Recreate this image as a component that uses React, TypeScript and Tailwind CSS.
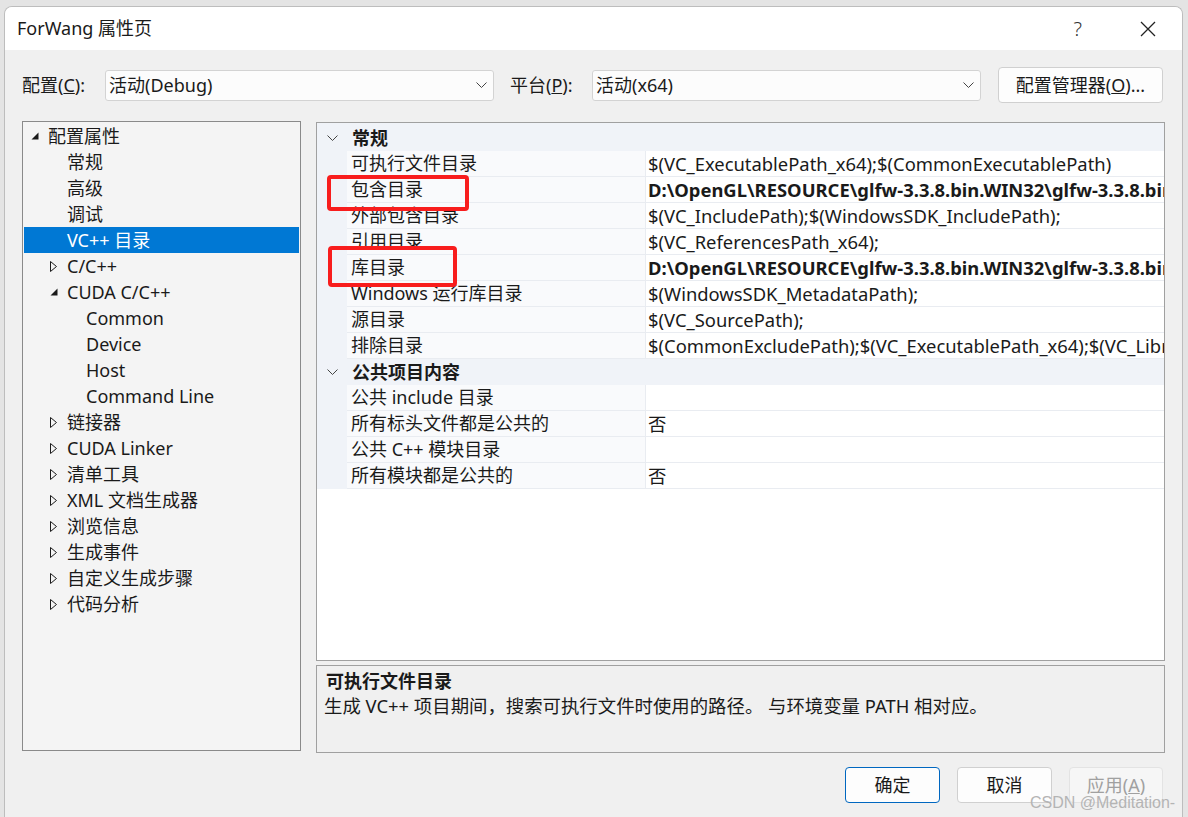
import React from "react";

const FONT = "font-['Noto_Sans','Noto_Sans_CJK_SC',sans-serif]";

function Chevron(props: { className?: string }) {
  return (
    <svg width="11" height="6" viewBox="0 0 11 6" className={props.className}>
      <path d="M0.5 0.5 L5.5 5.5 L10.5 0.5" fill="none" stroke="#444" strokeWidth="1" />
    </svg>
  );
}

function Expanded() {
  return (
    <svg width="8" height="8" viewBox="0 0 8 8">
      <polygon points="7.5,0.5 7.5,7.5 0.5,7.5" fill="#1a1a1a" />
    </svg>
  );
}

function Collapsed() {
  return (
    <svg width="7" height="11" viewBox="0 0 7 11">
      <polygon points="0.5,0.5 6.5,5.5 0.5,10.5" fill="none" stroke="#1a1a1a" strokeWidth="1" />
    </svg>
  );
}

type TreeItem = {
  label: string;
  level: 0 | 1 | 2;
  state?: "open" | "closed";
  selected?: boolean;
};

const tree: TreeItem[] = [
  { label: "配置属性", level: 0, state: "open" },
  { label: "常规", level: 1 },
  { label: "高级", level: 1 },
  { label: "调试", level: 1 },
  { label: "VC++ 目录", level: 1, selected: true },
  { label: "C/C++", level: 1, state: "closed" },
  { label: "CUDA C/C++", level: 1, state: "open" },
  { label: "Common", level: 2 },
  { label: "Device", level: 2 },
  { label: "Host", level: 2 },
  { label: "Command Line", level: 2 },
  { label: "链接器", level: 1, state: "closed" },
  { label: "CUDA Linker", level: 1, state: "closed" },
  { label: "清单工具", level: 1, state: "closed" },
  { label: "XML 文档生成器", level: 1, state: "closed" },
  { label: "浏览信息", level: 1, state: "closed" },
  { label: "生成事件", level: 1, state: "closed" },
  { label: "自定义生成步骤", level: 1, state: "closed" },
  { label: "代码分析", level: 1, state: "closed" },
];

const indent = { 0: "pl-[7px]", 1: "pl-[26px]", 2: "pl-[45px]" };

type Prop = { name: string; value: string; bold?: boolean };

const general: Prop[] = [
  { name: "可执行文件目录", value: "$(VC_ExecutablePath_x64);$(CommonExecutablePath)" },
  {
    name: "包含目录",
    value: "D:\\OpenGL\\RESOURCE\\glfw-3.3.8.bin.WIN32\\glfw-3.3.8.bin.WIN32\\include;$(IncludePath)",
    bold: true,
  },
  { name: "外部包含目录", value: "$(VC_IncludePath);$(WindowsSDK_IncludePath);" },
  { name: "引用目录", value: "$(VC_ReferencesPath_x64);" },
  {
    name: "库目录",
    value: "D:\\OpenGL\\RESOURCE\\glfw-3.3.8.bin.WIN32\\glfw-3.3.8.bin.WIN32\\lib-vc2022;$(LibraryPath)",
    bold: true,
  },
  { name: "Windows 运行库目录", value: "$(WindowsSDK_MetadataPath);" },
  { name: "源目录", value: "$(VC_SourcePath);" },
  { name: "排除目录", value: "$(CommonExcludePath);$(VC_ExecutablePath_x64);$(VC_LibraryPath_x64)" },
];

const shared: Prop[] = [
  { name: "公共 include 目录", value: "" },
  { name: "所有标头文件都是公共的", value: "否" },
  { name: "公共 C++ 模块目录", value: "" },
  { name: "所有模块都是公共的", value: "否" },
];

function Category(props: { title: string }) {
  return (
    <div className="flex h-[26px] items-center bg-[#f0f3f8]">
      <div className="flex w-[30px] items-center justify-center">
        <Chevron />
      </div>
      <span className="pl-[5px] font-bold">{props.title}</span>
    </div>
  );
}

function PropRow(props: { p: Prop }) {
  return (
    <div className="flex h-[26px]">
      <div className="w-[30px] shrink-0 bg-[#f0f3f8]" />
      <div className="flex w-[298px] shrink-0 items-center border-b border-[#e9ecf1] bg-[#f9fafc] pl-[4px]">
        {props.p.name}
      </div>
      <div
        className={`flex min-w-0 flex-1 items-center overflow-hidden whitespace-nowrap border-b border-l border-[#e9ecf1] bg-white pl-[2px] text-[18.4px] ${
          props.p.bold ? "font-bold" : ""
        }`}
      >
        {props.p.value}
      </div>
    </div>
  );
}

export default function App() {
  return (
    <div className={`h-[817px] overflow-hidden bg-[#e4e4e4] pl-[4px] pr-[5px] pt-[6px] text-[18px] text-[#1a1a1a] ${FONT}`}>
      <div className="relative h-[811px] overflow-hidden rounded-t-[8px] border border-b-0 border-[#bdbdbd] bg-[#f0f0f0]">
        {/* title bar */}
        <div className="flex h-[43px] items-center bg-white pl-[12px]">
          <span className="text-[18px]">ForWang 属性页</span>
          <div className="ml-auto flex items-center">
            <span className="mr-[58px] text-[20px] font-light text-[#333]">?</span>
            <svg width="16" height="16" viewBox="0 0 16 16" className="mr-[26px]">
              <path d="M1 1 L15 15 M15 1 L1 15" stroke="#222" strokeWidth="1.3" />
            </svg>
          </div>
        </div>

        {/* config row */}
        <div className="mt-[17px] flex h-[36px] items-center pl-[17px]">
          <span className="w-[83px]">
            配置(<span className="underline">C</span>):
          </span>
          <div className="flex h-[31px] w-[389px] items-center rounded-[3px] border border-[#d3d3d3] bg-[#fcfcfc] pl-[3px] pr-[6px]">
            <span>活动(Debug)</span>
            <Chevron className="ml-auto" />
          </div>
          <span className="ml-[16px] w-[82px]">
            平台(<span className="underline">P</span>):
          </span>
          <div className="flex h-[31px] w-[389px] items-center rounded-[3px] border border-[#d3d3d3] bg-[#fcfcfc] pl-[3px] pr-[6px]">
            <span>活动(x64)</span>
            <Chevron className="ml-auto" />
          </div>
          <div className="ml-[17px] flex h-[36px] w-[165px] items-center justify-center rounded-[4px] border border-[#d0d0d0] bg-[#fdfdfd]">
            配置管理器(<span className="underline">O</span>)...
          </div>
        </div>

        {/* main area */}
        <div className="mt-[18px] flex pl-[17px] pr-[17px]">
          <div className="h-[630px] w-[279px] shrink-0 border border-[#8a8a8a] bg-[#f4f4f4] pt-[1px]">
            {tree.map((t) => (
              <div
                key={t.label}
                className={`mx-[1px] flex h-[26px] items-center ${indent[t.level]} ${
                  t.selected ? "bg-[#0078d4] text-white" : ""
                }`}
              >
                <div className="flex w-[17px] items-center">
                  {t.state === "open" ? <Expanded /> : t.state === "closed" ? <Collapsed /> : null}
                </div>
                <span className="whitespace-nowrap">{t.label}</span>
              </div>
            ))}
          </div>

          <div className="ml-[15px] flex min-w-0 flex-1 flex-col pt-[1px]">
            <div className="relative h-[539px] overflow-hidden border border-[#a0a0a0] bg-white">
              <div className="h-[2px] bg-[#f0f3f8]" />
              <Category title="常规" />
              {general.map((p) => (
                <PropRow key={p.name} p={p} />
              ))}
              <Category title="公共项目内容" />
              {shared.map((p) => (
                <PropRow key={p.name} p={p} />
              ))}
              <div className="absolute left-[10px] top-[52px] h-[36px] w-[142px] rounded-[4px] border-[4px] border-[#f81d1d]" />
              <div className="absolute left-[11px] top-[123px] h-[41px] w-[129px] rounded-[4px] border-[4px] border-[#f81d1d]" />
            </div>
            <div className="mt-[4px] h-[88px] border border-[#a0a0a0] bg-[#f0f0f0] pl-[9px] pt-[2px]">
              <div className="font-bold leading-[26px]">可执行文件目录</div>
              <div className="-ml-[2px] text-[18.4px] leading-[24px]">
                生成 VC++ 项目期间，搜索可执行文件时使用的路径。&nbsp;与环境变量 PATH 相对应。
              </div>
            </div>
          </div>
        </div>

        {/* buttons */}
        <div className="mt-[14px] flex justify-end gap-[17px] pr-[19px]">
          <div className="flex h-[36px] w-[95px] items-center justify-center rounded-[4px] border border-[#0067c0] bg-[#fdfdfd]">
            确定
          </div>
          <div className="flex h-[36px] w-[95px] items-center justify-center rounded-[4px] border border-[#d0d0d0] bg-[#fdfdfd]">
            取消
          </div>
          <div className="flex h-[36px] w-[94px] items-center justify-center rounded-[4px] border border-[#e3e3e3] bg-[#f6f6f6] text-[#a0a0a0]">
            应用(<span className="underline">A</span>)
          </div>
        </div>

        <div className="absolute left-[1025px] top-[784px] font-['Liberation_Sans',sans-serif] text-[16px] text-[#b4b4b4]">
          CSDN @Meditation-
        </div>
      </div>
    </div>
  );
}
